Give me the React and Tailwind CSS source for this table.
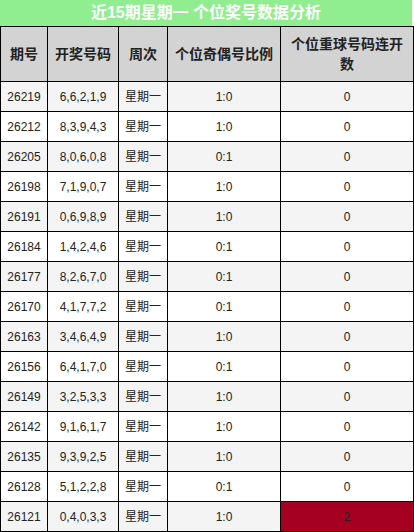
const rows = [
  ["26219", "6,6,2,1,9", "1:0", "0"],
  ["26212", "8,3,9,4,3", "1:0", "0"],
  ["26205", "8,0,6,0,8", "0:1", "0"],
  ["26198", "7,1,9,0,7", "1:0", "0"],
  ["26191", "0,6,9,8,9", "1:0", "0"],
  ["26184", "1,4,2,4,6", "0:1", "0"],
  ["26177", "8,2,6,7,0", "0:1", "0"],
  ["26170", "4,1,7,7,2", "0:1", "0"],
  ["26163", "3,4,6,4,9", "1:0", "0"],
  ["26156", "6,4,1,7,0", "0:1", "0"],
  ["26149", "3,2,5,3,3", "1:0", "0"],
  ["26142", "9,1,6,1,7", "1:0", "0"],
  ["26135", "9,3,9,2,5", "1:0", "0"],
  ["26128", "5,1,2,2,8", "0:1", "0"],
  ["26121", "0,4,0,3,3", "1:0", "2"],
];

export default function App() {
  return (
    <div
      className="w-[414px] h-[532px] bg-white text-[#222]"
      style={{ fontFamily: '"Liberation Sans", "Noto Sans CJK SC", sans-serif' }}
    >
      <div className="w-[412px] h-[26px] bg-[#90ee90] text-white font-bold text-[16px] flex items-center justify-center">
        近15期星期一 个位奖号数据分析
      </div>
      <table className="w-[413px] table-fixed border-collapse text-center">
        <colgroup>
          <col className="w-[47px]" />
          <col className="w-[71px]" />
          <col className="w-[49px]" />
          <col className="w-[113px]" />
          <col className="w-[133px]" />
        </colgroup>
        <thead>
          <tr className="h-[55px] bg-[#d3d3d3] text-[14px] font-bold">
            <th className="border border-black">期号</th>
            <th className="border border-black">开奖号码</th>
            <th className="border border-black">周次</th>
            <th className="border border-black">个位奇偶号比例</th>
            <th className="border border-black px-2 leading-[20px]">个位重球号码连开数</th>
          </tr>
        </thead>
        <tbody className="text-[12px]">
          {rows.map((r, i) => (
            <tr key={r[0]} className={i % 2 === 0 ? "h-[30px] bg-[#f4f4f4]" : "h-[30px] bg-white"}>
              <td className="border border-black">{r[0]}</td>
              <td className="border border-black">{r[1]}</td>
              <td className="border border-black">星期一</td>
              <td className="border border-black">{r[2]}</td>
              <td className={r[3] !== "0" ? "border border-black bg-[#a50021]" : "border border-black"}>{r[3]}</td>
            </tr>
          ))}
        </tbody>
      </table>
    </div>
  );
}
